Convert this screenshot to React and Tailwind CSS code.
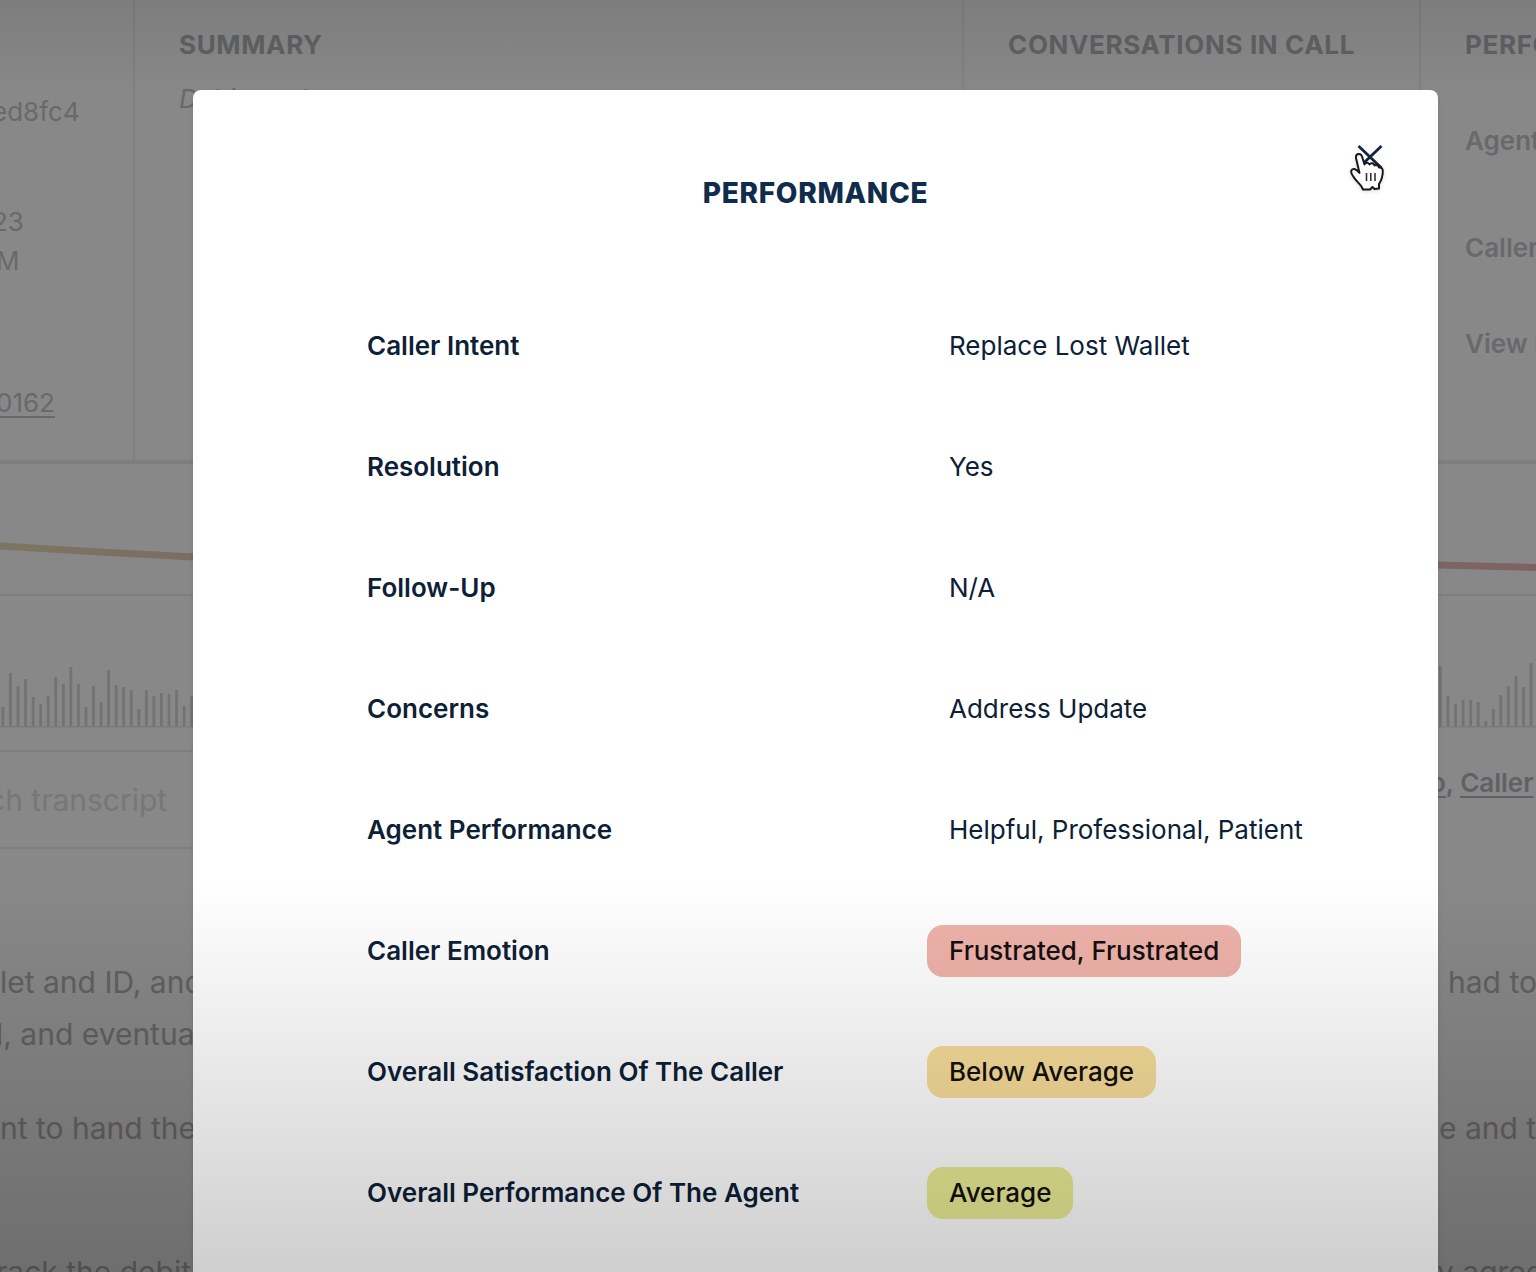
const PERFORMANCE = [
  { label: "Caller Intent", value: "Replace Lost Wallet" },
  { label: "Resolution", value: "Yes" },
  { label: "Follow-Up", value: "N/A" },
  { label: "Concerns", value: "Address Update" },
  { label: "Agent Performance", value: "Helpful, Professional, Patient" },
  { label: "Caller Emotion", value: "Frustrated, Frustrated", badge: "bg-[#efb3ab]" },
  { label: "Overall Satisfaction Of The Caller", value: "Below Average", badge: "bg-[#f8dd9a]" },
  { label: "Overall Performance Of The Agent", value: "Average", badge: "bg-[#e9ec94]" },
];

const WAVE_START = [20, 54, 41, 48, 30, 23, 31, 50, 43, 60, 43, 20, 41, 25, 57, 42, 40, 37, 18, 37, 31, 34, 33, 37, 21, 31];
const WAVE_END = [44, 61, 31, 23, 27, 27, 25, 6, 18, 32, 41, 51, 40, 64];

function Wave({ bars }) {
  return (
    <svg width={bars.length * 7.55} height="66" className="shrink-0" aria-hidden="true">
      {bars.map((h, i) => (
        <rect key={i} x={1.5 + i * 7.55} y={65 - h} width="2.8" height={h} fill="#737373" />
      ))}
      <rect x="0" y="64" width="100%" height="1.5" fill="#7a7a7a" />
    </svg>
  );
}

function CallSummary() {
  const heading = "text-[26px] leading-8 font-bold tracking-wide text-[#606164]";
  return (
    <section className="grid h-[464px] grid-cols-[135px_829fr_457fr_115px] border-b-4 border-[#7e7e7e] whitespace-nowrap">
      <div className="overflow-hidden border-r-2 border-[#808080] pt-24 text-[26px] leading-8 text-[#68696a]">
        <p className="-ml-2">ed8fc4</p>
        <p className="mt-[74px] -ml-2 leading-[39px]">23</p>
        <p className="-ml-1 leading-[39px]">M</p>
        <a href="#caller" className="mt-[107px] -ml-1 block underline underline-offset-4">0162</a>
      </div>
      <div className="overflow-hidden border-r-2 border-[#808080] px-11 pt-[29px]">
        <h2 className={heading}>SUMMARY</h2>
        <p className="mt-[22px] text-[26px] leading-8 text-[#68696a] italic">Debit card</p>
      </div>
      <div className="overflow-hidden border-r-2 border-[#808080] px-11 pt-[29px]">
        <h2 className={heading}>CONVERSATIONS IN CALL</h2>
      </div>
      <div className="overflow-hidden pt-[29px] pl-11 text-[26px] leading-8 font-semibold text-[#68696a]">
        <h2 className={heading}>PERFORMANCE</h2>
        <p className="mt-16">Agent</p>
        <p className="mt-[75px]">Caller</p>
        <a href="#more" className="mt-16 block">View More</a>
      </div>
    </section>
  );
}

function CallTimeline() {
  return (
    <section>
      <svg viewBox="0 0 1536 130" preserveAspectRatio="none" className="h-[130px] w-full" aria-hidden="true">
        <defs>
          <linearGradient id="mood" gradientUnits="userSpaceOnUse" x1="0" y1="0" x2="1536" y2="0">
            <stop offset="0" stopColor="#7d7563" />
            <stop offset="0.12" stopColor="#7b6d62" />
            <stop offset="1" stopColor="#7c6462" />
          </linearGradient>
        </defs>
        <path d="M0 82 L100 88 L193 93 L1438 101 L1536 103.500" fill="none" stroke="url(#mood)" strokeWidth="7" />
      </svg>
      <div className="flex h-[134px] items-end justify-between border-t-2 border-[#7e7e7e]">
        <Wave bars={WAVE_START} />
        <Wave bars={WAVE_END} />
      </div>
    </section>
  );
}

function Transcript() {
  return (
    <section className="whitespace-nowrap">
      <div className="mt-[22px] flex h-[99px] items-start justify-between">
        <input
          type="text"
          aria-label="Search transcript"
          placeholder="ch transcript"
          className="-ml-3 h-full w-1/3 border-y-2 border-[#7e7e7e] bg-transparent text-[30px] placeholder:text-[#777777]"
        />
        <p className="w-[106px] overflow-hidden pt-[17px] text-[26px] leading-8 font-semibold text-[#606164]">
          <a href="#follow-up" className="underline underline-offset-4">o</a>, <a href="#caller" className="underline underline-offset-4">Caller</a>
        </p>
      </div>
      <div className="mt-[107px] flex flex-col text-[30px] leading-[52px] text-[#616161]">
        <div className="flex justify-between">
          <div>
            <p>let and ID, and</p>
            <p className="-ml-1">l, and eventually</p>
          </div>
          <p className="w-[88px] overflow-hidden">had to</p>
        </div>
        <div className="mt-[42px] flex justify-between">
          <p>nt to hand the</p>
          <p className="w-[97px] overflow-hidden">e and the</p>
        </div>
        <div className="mt-[92px] flex justify-between">
          <p className="-ml-1">rack the debit</p>
          <p className="w-[99px] overflow-hidden">y agree</p>
        </div>
      </div>
    </section>
  );
}

function HandCursor() {
  return (
    <svg width="34" height="42" viewBox="0 0 34 42" className="pointer-events-none absolute top-4 left-0.5 drop-shadow-sm" aria-hidden="true">
      <path
        d="M6 8 C5.500 3.500 10.500 2.500 12 6.500 L14.500 14.500 C15.500 12 18.500 12 19.500 14.500 C21 12.500 24 13 24.500 15.500 C26 14.500 28.500 15 29 17.500 C31.500 17 33 19 32.800 22 C32.500 28 31 31 29 34 L29 38.500 L24.500 39 L22.500 37 L20 39.500 L13 39.500 L11.500 36.500 C9 33 5 30 3 26 C0 22 1 18.500 4.500 19 C6.500 19.500 8 21 9.500 23 Z"
        fill="#fff"
        stroke="#1a1a1a"
        strokeWidth="2"
        strokeLinejoin="round"
      />
      <path d="M16.500 23 V31 M20.800 23 V31 M25 23 V31" stroke="#333" strokeWidth="1.600" />
    </svg>
  );
}

function PerformanceDialog() {
  return (
    <div role="dialog" aria-modal="true" aria-labelledby="dialog-title" className="relative h-full overflow-hidden rounded-t-lg bg-white pt-[85px] text-[#0c2036] shadow-md">
      <button type="button" aria-label="Close" className="absolute top-11 right-[46px] size-11">
        <svg viewBox="0 0 44 44" className="size-11" aria-hidden="true">
          <path d="M10.500 12 L33.500 34 M33.500 12 L10.500 34" stroke="#14263f" strokeWidth="2.800" />
        </svg>
        <HandCursor />
      </button>
      <h1 id="dialog-title" className="text-center text-[28px] leading-9 font-extrabold tracking-wide text-[#102c4c]">PERFORMANCE</h1>
      <dl className="mt-[74px] text-[26px] leading-8">
        {PERFORMANCE.map(({ label, value, badge }) => (
          <div key={label} className="grid h-[121px] grid-cols-[560fr_511fr] items-center pl-[174px]">
            <dt className="font-semibold">{label}</dt>
            <dd className={badge ? "font-medium text-[#14100f]" : "px-[22px]"}>
              {badge ? <span className={`inline-block rounded-2xl px-[22px] py-[10px] ${badge}`}>{value}</span> : value}
            </dd>
          </div>
        ))}
      </dl>
    </div>
  );
}

export default function App() {
  return (
    <main className="relative h-screen overflow-hidden bg-[#888888] font-['Inter',sans-serif]">
      <CallSummary />
      <CallTimeline />
      <Transcript />
      <div className="pointer-events-none absolute inset-x-0 top-0 h-24 bg-linear-to-b from-black/8 to-transparent" />
      <div className="absolute inset-0 pt-[90px] pr-[98px] pl-[193px]">
        <PerformanceDialog />
      </div>
      <div className="pointer-events-none absolute inset-x-0 bottom-0 h-[392px] bg-linear-to-b from-transparent to-black/19" />
    </main>
  );
}
